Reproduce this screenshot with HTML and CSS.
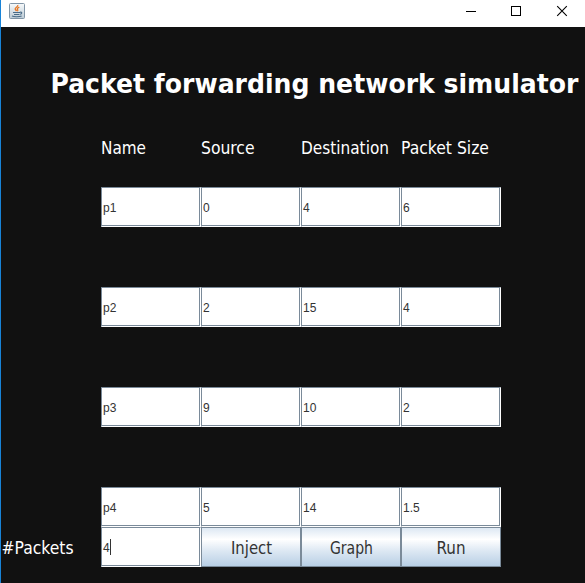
FILE: index.html
```html
<!DOCTYPE html>
<html lang="en">
<head>
<meta charset="utf-8">
<title>Packet forwarding network simulator</title>
<link rel="stylesheet" href="styles.css">
</head>
<body>
<div class="window">
  <header class="titlebar">
    <svg class="java" width="16" height="16" viewBox="0 0 16 16" fill="none">
      <defs><linearGradient id="tile" x1="0" y1="0" x2="0" y2="1"><stop offset="0" stop-color="#f8fafb"/><stop offset="1" stop-color="#bccbd5"/></linearGradient></defs>
      <rect x=".5" y=".5" width="15" height="15" rx="1" fill="url(#tile)" stroke="#8195a6"/>
      <path d="M8.8 2C9.2 4 5.6 4.4 6.2 6.2L7.5 8M10.3 4.2C8.6 5 7.7 5.7 8.8 7.1L8.3 8.2" stroke="#e87721" stroke-width="1.3"/>
      <path d="M4 9.5H11M5 11.5H10.5M11 9.2C13.5 8.7 13.2 11 11 11.3M3 13C5 14 10.5 13.9 12.6 12.9" stroke="#496b87" stroke-width="1.1"/>
    </svg>
    <svg class="controls" width="138" height="27" viewBox="0 0 138 27" fill="none" stroke="#000">
      <path d="M19 11.5H29" shape-rendering="crispEdges"/>
      <rect x="64.5" y="6.5" width="9" height="9" shape-rendering="crispEdges"/>
      <path d="M110.2 6.2L119.8 15.8M119.8 6.2L110.2 15.8" stroke-width="1.1"/>
    </svg>
  </header>
  <main class="panel">
    <h1 class="heading"><svg width="534" height="40"><text x="-.6" y="26" textLength="528" lengthAdjust="spacingAndGlyphs">Packet forwarding network simulator</text></svg></h1>
    <div class="row labels">
      <svg class="label"><text x="0" y="27" textLength="45" lengthAdjust="spacingAndGlyphs">Name</text></svg>
      <svg class="label"><text x="0" y="27" textLength="53.5" lengthAdjust="spacingAndGlyphs">Source</text></svg>
      <svg class="label"><text x="0" y="27" textLength="88" lengthAdjust="spacingAndGlyphs">Destination</text></svg>
      <svg class="label"><text x="0" y="27" textLength="88" lengthAdjust="spacingAndGlyphs">Packet Size</text></svg>
    </div>
    <div class="row packet"><div class="field">p1</div><div class="field">0</div><div class="field">4</div><div class="field">6</div></div>
    <div class="row packet"><div class="field">p2</div><div class="field">2</div><div class="field">15</div><div class="field">4</div></div>
    <div class="row packet"><div class="field">p3</div><div class="field">9</div><div class="field">10</div><div class="field">2</div></div>
    <div class="row packet last"><div class="field">p4</div><div class="field">5</div><div class="field">14</div><div class="field">1.5</div></div>
    <div class="row actions">
      <svg class="label"><text x=".5" y="27" textLength="72" lengthAdjust="spacingAndGlyphs">#Packets</text></svg>
      <div class="field">4<span class="caret"></span></div>
      <button class="button"><svg class="label"><text x="29" y="26" textLength="41" lengthAdjust="spacingAndGlyphs">Inject</text></svg></button>
      <button class="button"><svg class="label"><text x="28" y="26" textLength="43" lengthAdjust="spacingAndGlyphs">Graph</text></svg></button>
      <button class="button"><svg class="label"><text x="34.5" y="26" textLength="29" lengthAdjust="spacingAndGlyphs">Run</text></svg></button>
    </div>
  </main>
</div>
</body>
</html>
```
FILE: styles.css
```css
* { box-sizing: border-box; }
body { margin: 0; overflow: hidden; }
.window {
  width: 585px;
  height: 583px;
  border-left: 1px solid #1883d7;
  background: #111;
}
.titlebar {
  height: 27px;
  display: flex;
  justify-content: space-between;
  background: #fff;
}
.java { margin: 3px 0 0 8px; }
.panel { padding: 40px 0 0; }
.heading { height: 60px; margin: 0 0 0 50px; }
.heading svg { display: block; overflow: visible; }
.heading text {
  font: bold 27px "DejaVu Sans", sans-serif;
  fill: #fff;
}
.row {
  display: grid;
  grid-template-columns: repeat(4, 100px);
  grid-auto-rows: 40px;
  margin-left: 100px;
}
.labels { height: 60px; }
.packet { height: 100px; }
.packet.last { height: 40px; }
.actions { grid-template-columns: repeat(5, 100px); margin-left: 0; }
.label { display: block; width: 100px; height: 40px; overflow: visible; }
.label text {
  font: 17.5px "DejaVu Sans Condensed", "DejaVu Sans", sans-serif;
  fill: #fff;
}
.field {
  display: flex;
  align-items: center;
  padding: 2px 0 0 1px;
  border: 1px solid #7a8a99;
  border-right-color: #fff;
  border-bottom-color: #fff;
  box-shadow: inset -1px -1px #7a8a99;
  background: #fff;
  color: #333;
  font: 12px/14px "Liberation Sans", Arial, sans-serif;
}
.caret { width: 1px; height: 16px; margin-top: -2px; background: #333; }
.button {
  display: block;
  padding: 0;
  border: 1px solid #7a8a99;
  background: linear-gradient(#dde8f3, #fff 30%, #dde8f3 60%, #b8cfe5);
}
.button .label { width: 98px; height: 38px; }
.button text { fill: #333; }
```
